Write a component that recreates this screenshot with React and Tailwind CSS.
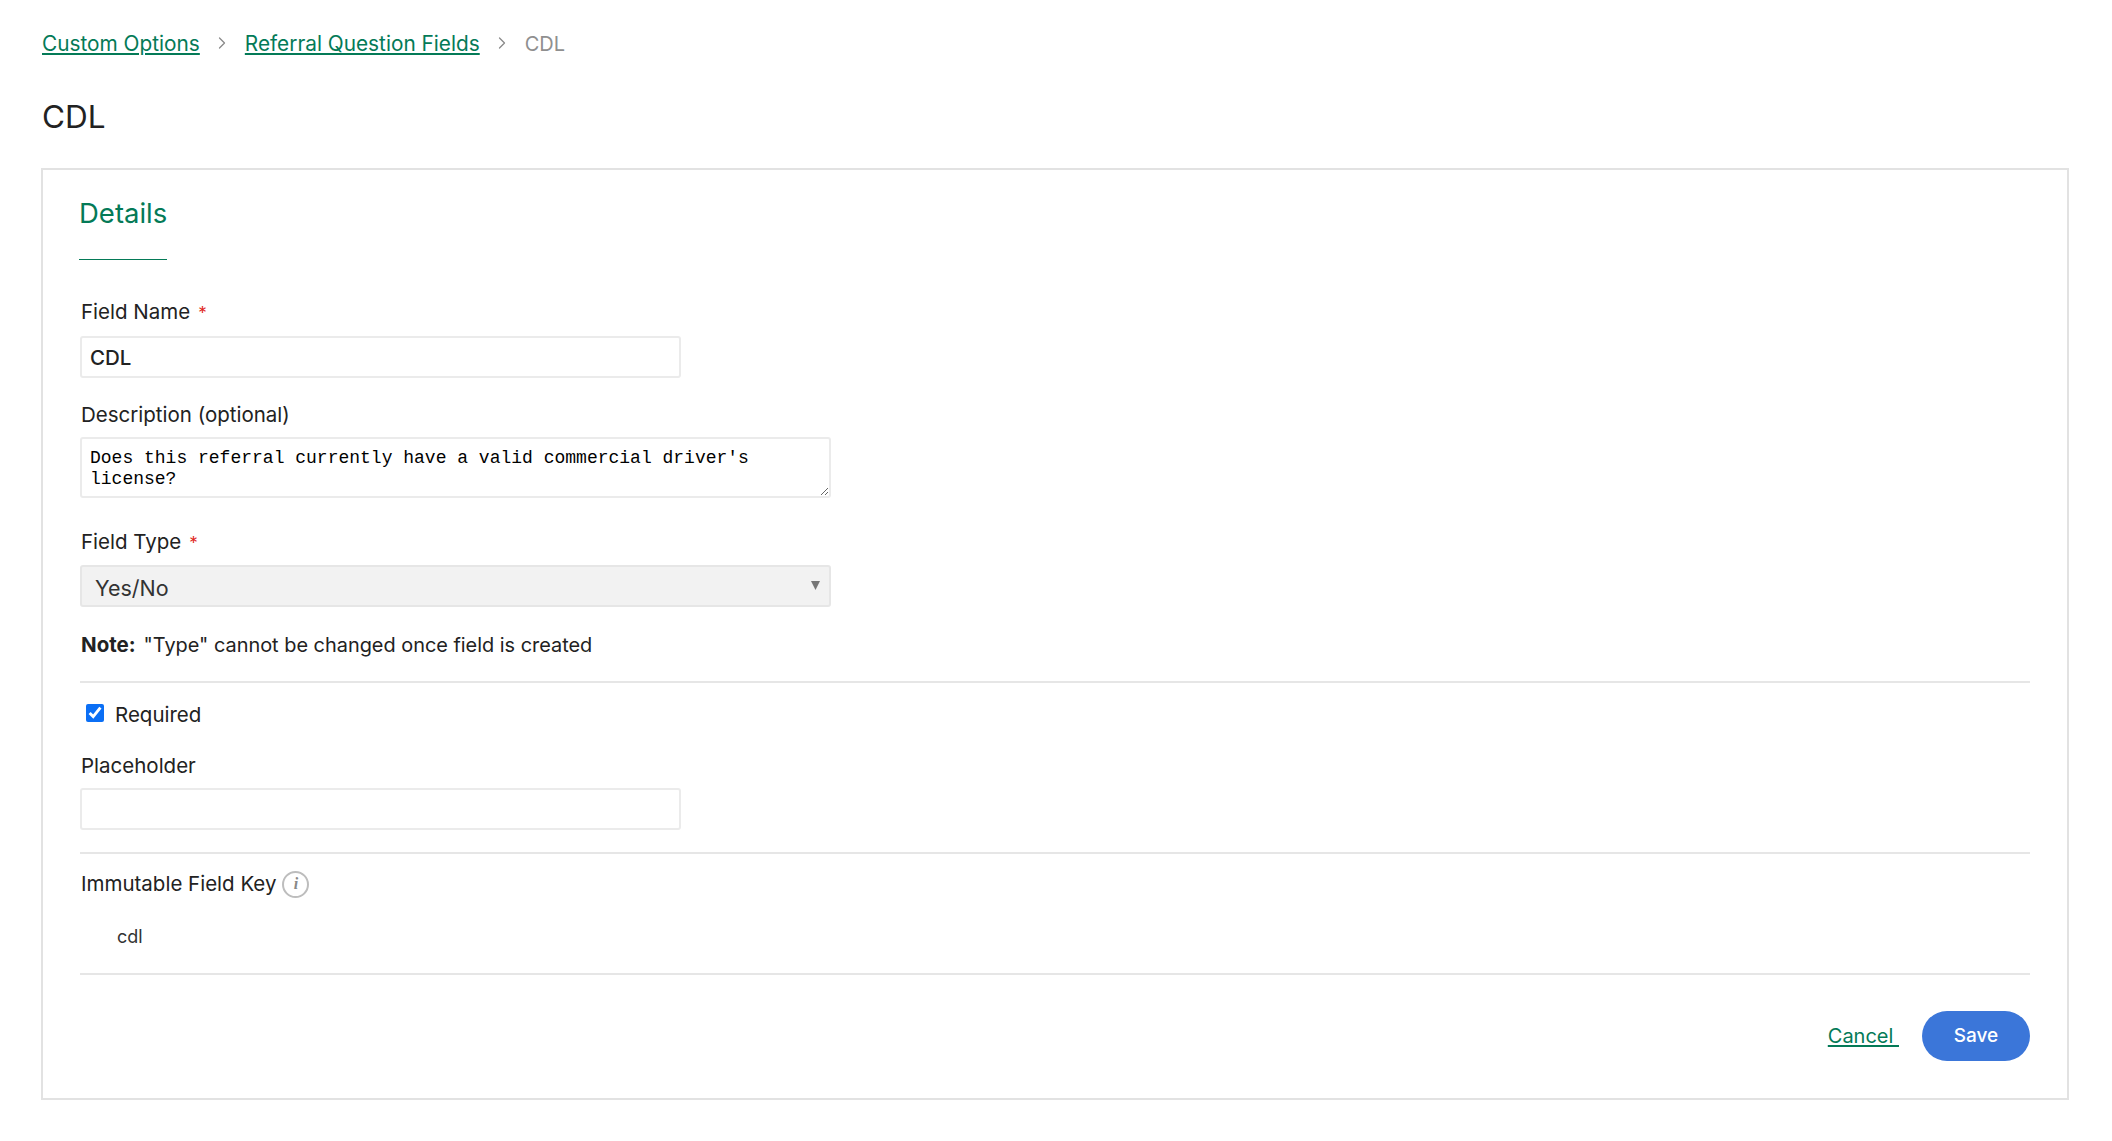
import { ChevronRight } from "lucide-react";

const FONT = "font-['Inter',sans-serif]";

const Required = () => <span className="ml-2 text-[#e0281c] text-[17px]">*</span>;

const Divider = () => <div className="h-0.5 bg-[#e6e6e6] w-full" />;

const Crumb = ({ children }) => (
  <a href="#" className="text-[#047a57] underline underline-offset-2 text-[20.8px] leading-[28px]">
    {children}
  </a>
);

const Chevron = () => (
  <ChevronRight className="w-[20px] h-[20px] mx-[12.5px] -mt-[2px] text-[#8a8a8a]" strokeWidth={1.5} />
);

export default function App() {
  return (
    <div className={`${FONT} bg-white min-h-[1141px] pt-[30px] pl-[41px] pr-[43px] text-[#222]`}>
      {/* Breadcrumb */}
      <div className="flex items-center h-[28px] pl-px">
        <Crumb>Custom Options</Crumb>
        <Chevron />
        <Crumb>Referral Question Fields</Crumb>
        <Chevron />
        <span className="text-[20px] text-[#8f8f8f] leading-[28px]">CDL</span>
      </div>

      <h1 className="mt-[39px] pl-px text-[31.5px] leading-[40px] font-normal text-[#222]">CDL</h1>

      {/* Card */}
      <div className="mt-[31px] border-2 border-[#e2e2e2] h-[932px] pl-[36px] pr-[37px]">
        <div className="inline-block border-b border-[#047a57] text-[#047a57] text-[27.5px] leading-[36px] pt-[25px] pb-[28px]">
          Details
        </div>

        <div className="pl-px">
          <label className="block mt-[38px] pl-px text-[20.5px] leading-[28px]">
            Field Name
            <Required />
          </label>
          <input
            readOnly
            value="CDL"
            className="block mt-[9px] w-[601px] h-[42px] border-2 border-[#ebebeb] rounded-[3px] px-[8px] text-[20.5px] font-medium text-[#222] outline-none"
          />

          <label className="block mt-[23px] pl-px text-[20.5px] leading-[28px]">Description (optional)</label>
          <textarea
            readOnly
            value="Does this referral currently have a valid commercial driver's license?"
            className="block mt-[8px] w-[751px] h-[61px] border-2 border-[#ebebeb] rounded-[3px] px-[8px] pt-[9px] font-['Liberation_Mono',monospace] text-[18px] leading-[21px] text-black outline-none"
          />

          <label className="block mt-[30px] pl-px text-[20.5px] leading-[28px]">
            Field Type
            <Required />
          </label>
          <div className="relative mt-[8px] w-[751px] h-[42px] border-2 border-[#e6e6e6] rounded-[3px] bg-[#f2f2f2] pl-[13px] text-[21.5px] leading-[42px] text-[#333]">
            Yes/No
            <svg className="absolute right-[9px] top-[14px] w-[9px] h-[9px]" viewBox="0 0 10 10">
              <path d="M0 0h10L5 10z" fill="#777" />
            </svg>
          </div>

          <p className="mt-[24px] pl-px text-[19.9px] leading-[28px]">
            <span className="font-bold text-[20.5px]">Note:</span>
            <span className="ml-2">"Type" cannot be changed once field is created</span>
          </p>

          <div className="mt-[22px]"><Divider /></div>

          <div className="flex items-center h-[28px] mt-[18px] pl-[6px]">
            <input type="checkbox" readOnly checked className="w-[18px] h-[18px] -mt-[4px] accent-[#0b6ff5]" />
            <span className="ml-[11px] text-[20.5px] leading-[28px]">Required</span>
          </div>

          <label className="block mt-[23px] pl-px text-[20.5px] leading-[28px]">Placeholder</label>
          <input
            readOnly
            className="block mt-[8px] w-[601px] h-[42px] border-2 border-[#ebebeb] rounded-[3px] px-[8px] outline-none"
          />

          <div className="mt-[22px]"><Divider /></div>

          <div className="flex items-center mt-[16px] pl-px h-[28px] text-[20.5px]">
            Immutable Field Key
            <span className="ml-[6px] w-[27px] h-[27px] rounded-full border-2 border-[#bdbdbd] flex items-center justify-center font-['Liberation_Serif',serif] italic font-bold text-[16px] text-[#888]">
              i
            </span>
          </div>

          <div className="mt-[25px] pl-[37px] text-[18px] leading-[28px] text-[#333]">cdl</div>

          <div className="mt-[22px]"><Divider /></div>

          <div className="flex items-center justify-end mt-[36px]">
            <a href="#" className="text-[#047a57] underline underline-offset-2 text-[20px] whitespace-pre">Cancel </a>
            <button className="ml-[23px] w-[108px] h-[50px] rounded-full bg-[#3b76d9] text-white text-[19px] font-medium">
              Save
            </button>
          </div>
        </div>
      </div>
    </div>
  );
}
